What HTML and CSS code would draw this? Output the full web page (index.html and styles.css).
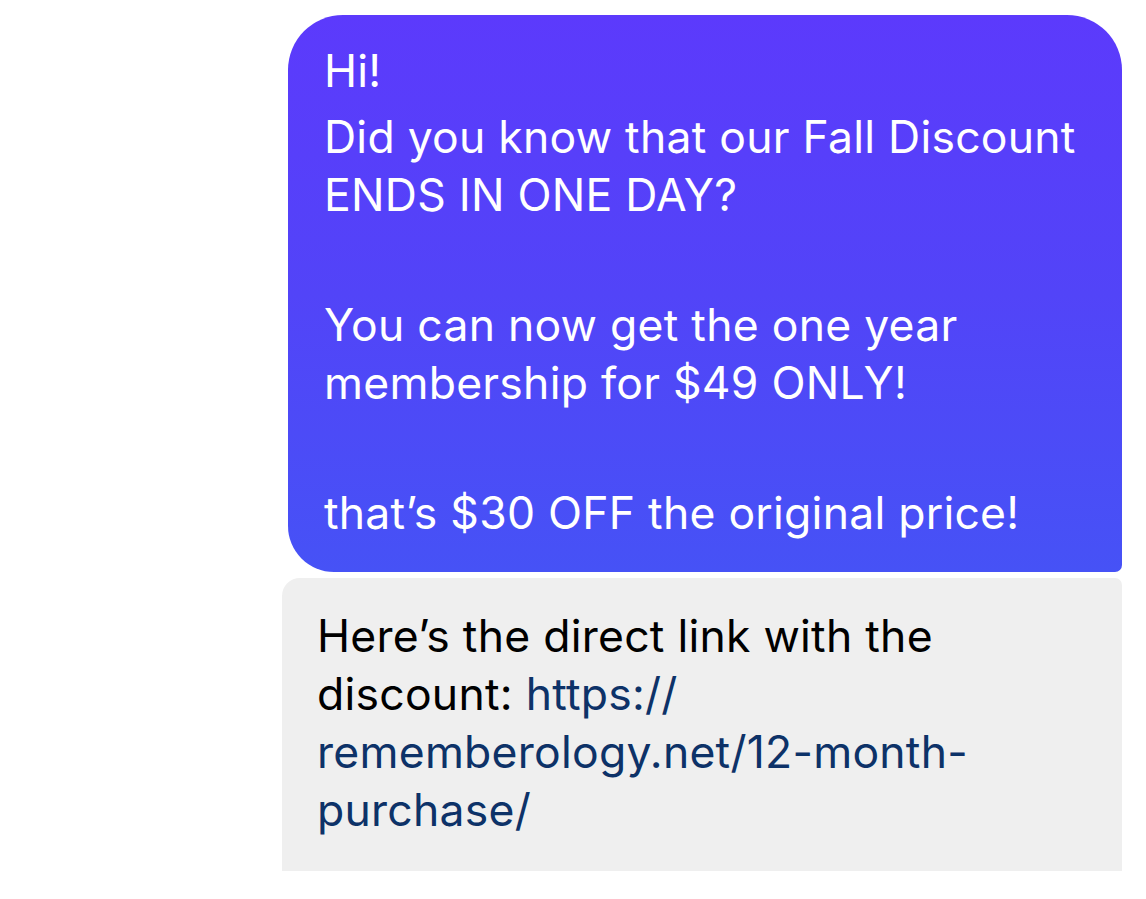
FILE: index.html
```html
<!DOCTYPE html>
<html lang="en">
<head>
<meta charset="utf-8">
<title>Messages</title>
<link rel="stylesheet" href="styles.css">
</head>
<body>
<div class="thread">
  <div class="bubble sent">
    <div class="line first">Hi!</div>
    <div class="line">Did you know that our Fall Discount</div>
    <div class="line">ENDS IN ONE DAY?</div>
    <div class="gap"></div>
    <div class="line">You can now get the one year</div>
    <div class="line">membership for $49 ONLY!</div>
    <div class="gap"></div>
    <div class="line">that’s $30 OFF the original price!</div>
  </div>
  <div class="bubble received">
    <div class="line">Here’s the direct link with the</div>
    <div class="line">discount: <span class="link">https://</span></div>
    <div class="line"><span class="link">rememberology.net/12-month-</span></div>
    <div class="line"><span class="link">purchase/</span></div>
  </div>
</div>
</body>
</html>
```
FILE: styles.css
```css
html, body {
  margin: 0;
  padding: 0;
  background: #ffffff;
}
body {
  width: 1146px;
  height: 899px;
  overflow: hidden;
  font-family: Inter, "Noto Sans", sans-serif;
}
.thread {
  display: flex;
  flex-direction: column;
  gap: 6px;
  width: 840px;
  margin-left: 282px;
  padding-top: 15px;
}
.bubble {
  box-sizing: border-box;
  font-size: 44.5px;
  letter-spacing: 0.25px;
  line-height: 58px;
  white-space: nowrap;
}
.sent {
  margin-left: 6px;
  width: 834px;
  height: 557px;
  padding: 27px 0 0 36px;
  color: #ffffff;
  background: linear-gradient(180deg, #5c3afc 0%, #5244f8 50%, #4652f6 100%);
  border-radius: 55px 55px 7px 46px;
}
.sent .first {
  margin-bottom: 8px;
}
.gap {
  height: 72px;
}
.received {
  width: 840px;
  height: 293px;
  padding: 29px 0 0 35px;
  color: #000000;
  background: #efefef;
  border-radius: 18px 7px 0 0;
}
.link {
  color: #0d3268;
}
```
